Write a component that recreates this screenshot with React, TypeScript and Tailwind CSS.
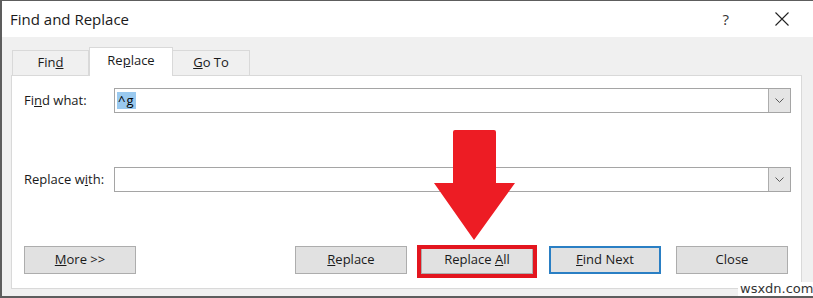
import React from "react";

const font = { fontFamily: '"Open Sans", "Noto Sans", sans-serif' };

const Btn = ({ children, blue = false }: { children: React.ReactNode; blue?: boolean }) => (
  <div
    className={
      "flex h-[28px] w-[112px] items-center justify-center bg-[#e1e1e1] text-[13px] text-[#1a1a1a] " +
      (blue ? "border-2 border-[#2a7fc4]" : "border border-[#adadad]")
    }
  >
    {children}
  </div>
);

const Combo = ({ value }: { value?: string }) => (
  <div className="flex h-[25px] flex-1 border border-[#a5a5a5] bg-white">
    <div className="flex flex-1 items-center pl-[2px] text-[13px] text-black">
      {value && <span className="bg-[#99c9ef] px-px leading-[17px] tracking-[1px]">{value}</span>}
    </div>
    <div className="flex w-[22px] items-center justify-center border-l border-[#adadad] bg-[#e5e5e5]">
      <svg width="9" height="5" viewBox="0 0 9 5">
        <path d="M0.5 0.5 L4.5 4.5 L8.5 0.5" fill="none" stroke="#5a5a5a" strokeWidth="1" />
      </svg>
    </div>
  </div>
);

export default function App() {
  return (
    <div className="relative h-[298px] w-[813px] overflow-hidden bg-white" style={font}>
      <div className="flex h-full w-full flex-col border-l-2 border-t border-b-2 border-[#5d5d5d]">
        {/* title bar */}
        <div className="flex h-[36px] items-center bg-white">
          <span className="pl-[8px] text-[15px] text-[#1a1a1a]">Find and Replace</span>
          <span className="ml-auto mr-[46px] text-[15px] text-[#333]">?</span>
          <svg className="mr-[24px]" width="14" height="14" viewBox="0 0 14 14">
            <path d="M0.5 0.5 L13.5 13.5 M13.5 0.5 L0.5 13.5" stroke="#222" strokeWidth="1.1" />
          </svg>
        </div>

        {/* body */}
        <div className="flex flex-1 flex-col bg-[#f0f0f0] pl-[9px] pr-[11px] pt-[10px]">
          <div className="flex items-end pl-px text-[13px] text-[#1a1a1a]">
            <div className="flex h-[25px] w-[77px] items-center justify-center border border-b-0 border-[#d9d9d9] bg-[#f0f0f0]">
              <span>
                Fin<u>d</u>
              </span>
            </div>
            <div className="relative z-10 -mb-px flex h-[29px] w-[84px] items-center justify-center border border-b-0 border-[#d9d9d9] bg-white pb-[2px]">
              <span>
                Re<u>p</u>lace
              </span>
            </div>
            <div className="flex h-[25px] w-[77px] items-center justify-center border border-b-0 border-l-0 border-[#d9d9d9] bg-[#f0f0f0]">
              <span>
                <u>G</u>o To
              </span>
            </div>
          </div>

          <div className="flex h-[214px] flex-col border border-[#d9d9d9] bg-white pl-[12px] pr-[10px] pt-[12px]">
            <div className="flex items-center">
              <span className="w-[90px] text-[13px] text-[#1a1a1a]">
                Fi<u>n</u>d what:
              </span>
              <Combo value="^g" />
            </div>
            <div className="mt-[54px] flex items-center">
              <span className="w-[90px] text-[13px] text-[#1a1a1a]">
                Replace w<u>i</u>th:
              </span>
              <Combo />
            </div>
            <div className="mt-[54px] flex items-center pr-px">
              <Btn>
                <span>
                  <u>M</u>ore &gt;&gt;
                </span>
              </Btn>
              <div className="ml-[159px]">
                <Btn>
                  <span>
                    <u>R</u>eplace
                  </span>
                </Btn>
              </div>
              <div className="relative ml-[14px]">
                <Btn>
                  <span>
                    Replace <u>A</u>ll
                  </span>
                </Btn>
                <div className="absolute left-[-4px] top-[-1px] h-[33px] w-[120px] border-[4px] border-[#e3161f]" />
              </div>
              <div className="ml-[16px]">
                <Btn blue>
                  <span>
                    <u>F</u>ind Next
                  </span>
                </Btn>
              </div>
              <div className="ml-[15px]">
                <Btn>
                  <span>Close</span>
                </Btn>
              </div>
            </div>
          </div>
        </div>
      </div>

      {/* annotation arrow */}
      <svg className="absolute left-[430px] top-[126px]" width="90" height="118" viewBox="0 0 90 118">
        <path
          d="M25 4 Q23 4 23 6 L23 57 L4 57 L44 114 L85 57 L66 57 L66 6 Q66 4 64 4 Z"
          fill="#ed1c24"
        />
      </svg>

      <div
        className="absolute left-[738px] top-[282px] bg-white px-[2px] text-[13px] leading-[14px] text-[#333]"
        style={{ fontFamily: '"DejaVu Sans", sans-serif' }}
      >
        wsxdn.com
      </div>
    </div>
  );
}
